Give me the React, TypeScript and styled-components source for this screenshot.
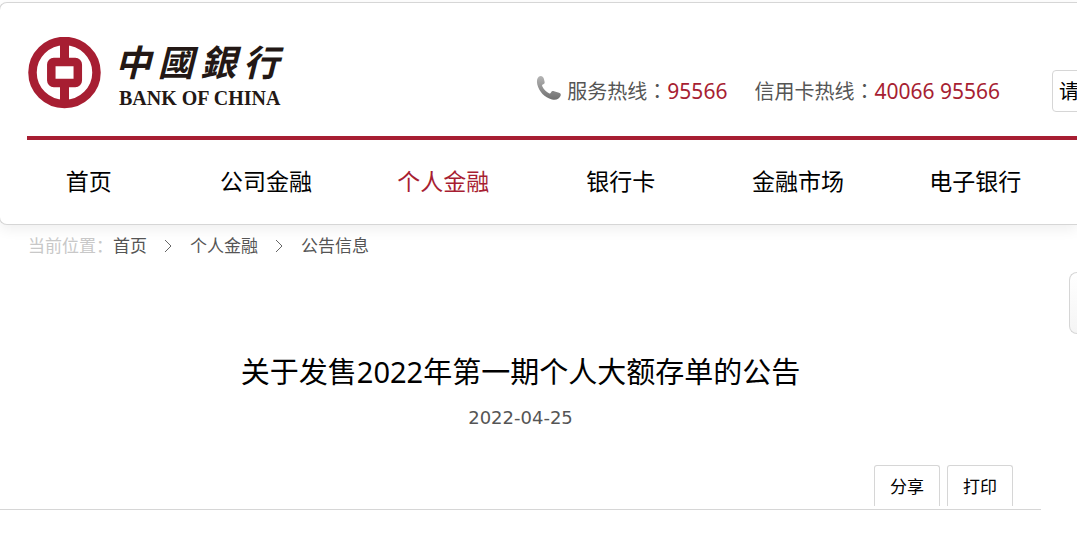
import React from "react";
import styled, { createGlobalStyle } from "styled-components";

const RED = "#a71e32";

const GlobalStyle = createGlobalStyle`
  * { box-sizing: border-box; }
  body {
    margin: 0;
    background: #fff;
    color: #000;
    font-family: "Noto Sans", "Noto Sans CJK SC", sans-serif;
    overflow-x: hidden;
  }
  a { color: inherit; text-decoration: none; }
`;

const Page = styled.div`
  position: relative;
  padding-top: 2px;
  overflow: hidden;
`;

const Header = styled.header`
  border: 1px solid #d6d6d6;
  border-right: 0;
  border-radius: 8px 0 0 8px;
  box-shadow: 0 4px 14px rgba(0, 0, 0, 0.07);
  margin-left: -1px;
  background: #fff;
`;

const TopBar = styled.div`
  display: flex;
  align-items: flex-start;
  height: 133px;
  margin-left: 27px;
`;

const Brand = styled.a`
  display: flex;
  flex: none;
  margin-top: 34px;
`;

const Emblem = styled.svg`
  display: block;
  width: 74px;
  height: 72px;
  margin-right: 14px;
`;

const BrandText = styled.span`
  display: flex;
  flex-direction: column;
  width: 170px;
  color: #231815;
  white-space: nowrap;
`;

const BrandChinese = styled.span`
  display: flex;
  justify-content: space-between;
  width: 164px;
  font: italic bold 36px/46px "Noto Sans CJK TC", sans-serif;
`;

const BrandEnglish = styled.span`
  padding-left: 4px;
  font: bold 20px/30px "Liberation Serif", serif;
`;

const Hotlines = styled.div`
  display: flex;
  flex: none;
  align-items: center;
  height: 30px;
  margin: 73px 52px 0 auto;
  color: #555;
  font-size: 20px;
  line-height: 30px;
  white-space: nowrap;
`;

const PhoneIcon = styled.svg`
  width: 26px;
  height: 26px;
  margin: 0 5px 6px 0;
`;

const Hotline = styled.span`
  & + & { margin-left: 27px; }
`;

const CenteredColon = styled.span`
  font-family: "Noto Sans CJK TC", sans-serif;
  line-height: 20px;
`;

const Number = styled.span`
  color: ${RED};
  font-size: 21px;
`;

const SearchForm = styled.form`
  flex: none;
  width: 25px;
  margin-top: 67px;
`;

const SearchInput = styled.input`
  display: block;
  width: 240px;
  height: 42px;
  padding: 0 6px;
  border: 1px solid #d6d6d6;
  border-radius: 4px;
  font: inherit;
  font-size: 20px;
  &::placeholder { color: #000; opacity: 1; }
`;

const Rule = styled.div`
  height: 4px;
  margin-left: 27px;
  background: ${RED};
`;

const Nav = styled.nav`
  display: grid;
  grid-template-columns: repeat(6, 1fr);
  padding: 0 13px 2px 0;
`;

const NavLink = styled.a<{ $active?: boolean }>`
  color: ${(p) => (p.$active ? RED : "#000")};
  font-size: 23px;
  line-height: 82px;
  text-align: center;
`;

const Breadcrumb = styled.nav`
  display: flex;
  align-items: center;
  margin: 8px 0 0 28px;
  color: #555;
  font-size: 17px;
  line-height: 26px;
`;

const Muted = styled.span`
  color: #c8c8c8;
`;

const Chevron = styled.svg`
  width: 8px;
  height: 14px;
  margin: 0 18px 0 17px;
`;

const Article = styled.main`
  margin-right: 36px;
  padding-top: 88px;
  border-bottom: 1px solid #d6d6d6;
  text-align: center;
`;

const Title = styled.h1`
  margin: 0;
  font-size: 29px;
  font-weight: 400;
  line-height: 50px;
`;

const PublishDate = styled.time`
  display: block;
  margin-top: 8px;
  color: #555;
  font: 18px/26px "DejaVu Sans", sans-serif;
`;

const Actions = styled.div`
  display: flex;
  justify-content: flex-end;
  gap: 7px;
  margin: 34px 28px 3px 0;
`;

const ActionButton = styled.button`
  width: 66px;
  height: 41px;
  padding: 0 0 2px;
  border: 1px solid #d6d6d6;
  border-bottom: 0;
  border-radius: 3px 3px 0 0;
  background: #fff;
  color: #000;
  font: inherit;
  font-size: 17px;
`;

const SideTab = styled.aside`
  position: absolute;
  top: 272px;
  right: 0;
  width: 8px;
  height: 62px;
  border: 1px solid #d6d6d6;
  border-right: 0;
  border-radius: 8px 0 0 8px;
  background: linear-gradient(#fff, #f5f5f5);
`;

const Separator = () => (
  <Chevron viewBox="0 0 8 14" fill="none" stroke="#666" aria-hidden="true">
    <path d="M1 1l6 6-6 6" />
  </Chevron>
);

const navItems = ["首页", "公司金融", "个人金融", "银行卡", "金融市场", "电子银行"];

export default function App() {
  return (
    <Page>
      <GlobalStyle />
      <Header>
        <TopBar>
          <Brand href="#">
            <Emblem viewBox="0 0 74 72" aria-hidden="true">
              <g fill="none" stroke={RED}>
                <ellipse cx="37.5" cy="35.5" rx="32" ry="31.500" strokeWidth="8.500" />
                <rect x="24.300" y="25" width="26.500" height="21" rx="2.500" strokeWidth="8.500" />
                <path d="M37.500 2v20M37.500 49v20" strokeWidth="9" />
              </g>
            </Emblem>
            <BrandText>
              <BrandChinese>
                <span>中</span>
                <span>國</span>
                <span>銀</span>
                <span>行</span>
              </BrandChinese>
              <BrandEnglish>BANK OF CHINA</BrandEnglish>
            </BrandText>
          </Brand>
          <Hotlines>
            <PhoneIcon viewBox="0 0 26 26" aria-hidden="true">
              <defs>
                <linearGradient id="phone" x1="0" y1="0" x2="0" y2="1">
                  <stop offset="0" stopColor="#b5b5b5" />
                  <stop offset="1" stopColor="#6f6f6f" />
                </linearGradient>
              </defs>
              <path
                fill="url(#phone)"
                d="M3 1.5C5 .3 7 1 7.8 3.5l.8 3.3c.3 1.5-.3 2.2-1.8 2.8-.8.3-.8 1.2-.4 2 1.5 3.2 3.8 5.3 6.6 6.600.9.4 1.500.2 2-.7.7-1.3 1.7-1.7 3-1.300l5 1.600c1.700.6 2.200 1.700 1.500 3.300-1.400 3-4.500 4.500-8.500 3.400C8.500 22.500 3 16.500 1.300 9.500.6 6 .9 3 3 1.500z"
              />
            </PhoneIcon>
            <Hotline>
              服务热线<CenteredColon>：</CenteredColon>
              <Number>95566</Number>
            </Hotline>
            <Hotline>
              信用卡热线<CenteredColon>：</CenteredColon>
              <Number>40066 95566</Number>
            </Hotline>
          </Hotlines>
          <SearchForm>
            <SearchInput type="text" aria-label="搜索" placeholder="请输入关键字" />
          </SearchForm>
        </TopBar>
        <Rule />
        <Nav>
          {navItems.map((label) => (
            <NavLink key={label} href="#" $active={label === "个人金融"}>
              {label}
            </NavLink>
          ))}
        </Nav>
      </Header>
      <Breadcrumb>
        <Muted>当前位置：</Muted>
        <a href="#">首页</a>
        <Separator />
        <a href="#">个人金融</a>
        <Separator />
        <a href="#">公告信息</a>
      </Breadcrumb>
      <Article>
        <Title>关于发售2022年第一期个人大额存单的公告</Title>
        <PublishDate dateTime="2022-04-25">2022-04-25</PublishDate>
        <Actions>
          <ActionButton type="button">分享</ActionButton>
          <ActionButton type="button">打印</ActionButton>
        </Actions>
      </Article>
      <SideTab />
    </Page>
  );
}
